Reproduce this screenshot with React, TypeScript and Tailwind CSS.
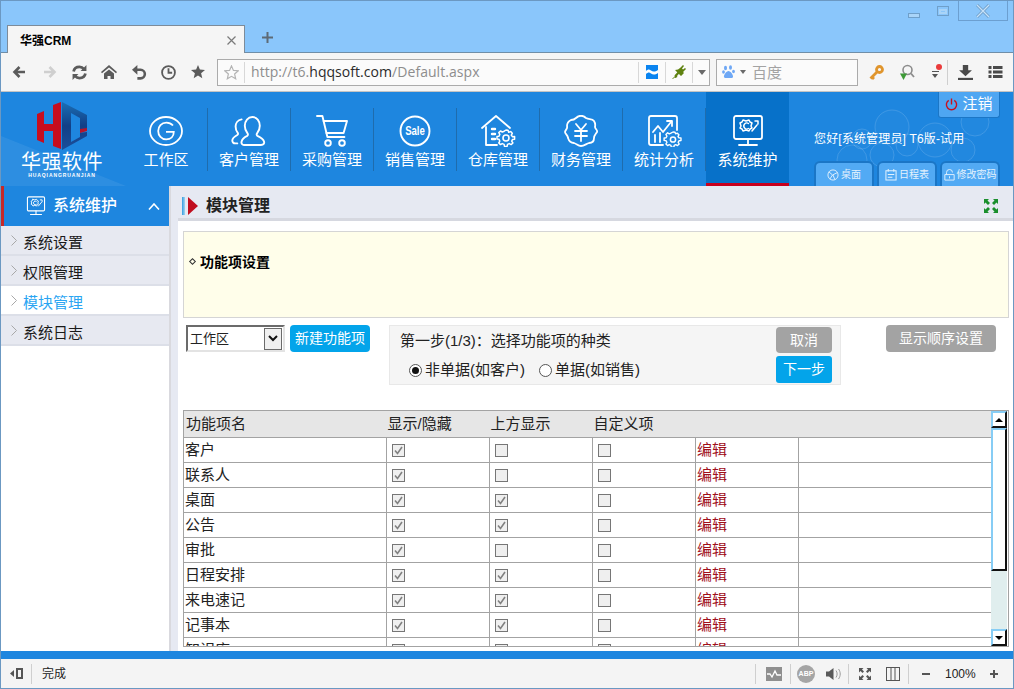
import React from "react";

const navIcon = "w-[36px] h-[32px] text-white";

function IconG() {
  return (
    <svg viewBox="0 0 36 32" className={navIcon} fill="none" stroke="currentColor" strokeWidth="1.8">
      <ellipse cx="18" cy="16" rx="16" ry="14" />
      <path d="M25 10.5C23 8.4 20.8 7.6 18.4 7.6c-5 0-8.2 3.8-8.2 8.4s3.3 8.4 8 8.4c4.6 0 7.6-3 7.6-7.6H18" />
    </svg>
  );
}
function IconUsers() {
  return (
    <svg viewBox="0 0 36 32" className={navIcon} fill="none" stroke="currentColor" strokeWidth="1.9" strokeLinejoin="round" strokeLinecap="round">
      <path d="M13 30h17c2.6 0 3.6-1.6 3-3.6-.8-2.8-4-4.4-6.6-5.6-.9-.5-1-1.6-.2-2.6 1.6-2 2.6-4.4 2.6-7.4 0-5-3-8.8-7.4-8.8s-7.6 3.8-7.6 8.8c0 3 1 5.4 2.6 7.4.8 1 .7 2.1-.2 2.6-2.6 1.2-4.8 2.8-5.6 5.6-.6 2 .7 3.6 2.4 3.6z" />
      <path d="M10.6 4.4C6.6 5 4.6 8.4 4.6 11.6c0 2.6.8 4.6 2 6 .7.9.6 1.9-.3 2.4-2.2 1.2-4.8 3-5 5.4-.1 1.6 1 3 3 3h2" />
    </svg>
  );
}
function IconCart() {
  return (
    <svg viewBox="0 0 36 32" className={navIcon} fill="none" stroke="currentColor" strokeWidth="1.9" strokeLinejoin="round" strokeLinecap="round">
      <path d="M3 1h5.4l5 21h17" />
      <path d="M9.6 6H33l-3.4 12H12.4" />
      <circle cx="14" cy="28" r="2.8" />
      <circle cx="28" cy="28" r="2.8" />
    </svg>
  );
}
function IconSale() {
  return (
    <svg viewBox="0 0 36 32" className={navIcon} fill="none" stroke="currentColor" strokeWidth="1.9">
      <ellipse cx="18" cy="16" rx="14.5" ry="14.5" />
      <text x="18" y="20.5" textAnchor="middle" fill="currentColor" stroke="none" fontSize="12" fontWeight="700" fontFamily="Liberation Sans, sans-serif" transform="translate(3.6 0) scale(0.8 1)">Sale</text>
    </svg>
  );
}
function IconStore() {
  return (
    <svg viewBox="0 0 36 32" className={navIcon} fill="none" stroke="currentColor" strokeWidth="1.8" strokeLinejoin="round" strokeLinecap="round">
      <path d="M2 13 16 1l14 12" />
      <path d="M6 12v18h11" />
      <path d="M12 14h3M12 19h3M12 24h3" strokeWidth="2.4" />
      <path d="M26 15l2 .2.7 2 2-.6 1.6 1.7-1 1.9 1.3 1.5 2-.1v2.6l-2 .2-.9 1.8 1.2 1.8-1.8 1.6-1.8-1-1.8.8-.4 2h-2.6l-.4-2-1.9-.8-1.7 1-1.7-1.7 1-1.8-.8-1.8-2-.3v-2.5l2-.3.8-1.8-1-1.8 1.7-1.6 1.8 1 1.9-.8z" strokeWidth="1.5" />
      <circle cx="26" cy="23" r="3" strokeWidth="1.6" />
    </svg>
  );
}
function IconMoney() {
  return (
    <svg viewBox="0 0 36 32" className={navIcon} fill="none" stroke="currentColor" strokeWidth="1.8" strokeLinejoin="round" strokeLinecap="round">
      <path d="M13 3c3-3 7-3 10 0 3 2 6 0 8 3s1 5 1 6c0 2 3 3 2 5-1 2-3 3-3 6s-2 5-5 5c-3 1-5 3-8 3s-4-2-7-3c-4 0-5-2-6-5 0-3-3-4-3-6s3-3 2-6c0-3 2-5 4-6 2 0 3 0 5-2z" />
      <path d="M13 9l5 6 5-6M12 16h12M12 21h12M18 15v11" />
    </svg>
  );
}
function IconStats() {
  return (
    <svg viewBox="0 0 36 32" className={navIcon} fill="none" stroke="currentColor" strokeWidth="1.8" strokeLinejoin="round" strokeLinecap="round">
      <path d="M17 30H5q-2 0-2-2V3q0-2 2-2h24q2 0 2 2v12" />
      <path d="M7 17l5-6 5 6 8-10" />
      <path d="M21 6h5v5" />
      <path d="M9 27v-7M14 27v-9" />
      <path d="M27 17l2 .2.6 1.6 1.7-.6 1.6 1.6-.9 1.7 1 1.4h2v2.6l-2 .2-.8 1.6 1 1.7-1.7 1.6-1.7-.9-1.6.7-.3 1.8h-2.6l-.4-1.8-1.7-.7-1.6.9-1.7-1.6 1-1.7-.8-1.6-2-.3v-2.4l2-.3.8-1.6-1-1.7 1.7-1.6 1.7 1 1.6-.7z" strokeWidth="1.4" />
      <circle cx="27" cy="24.5" r="2.6" strokeWidth="1.5" />
    </svg>
  );
}
function IconMonitor({ small }: { small?: boolean }) {
  return (
    <svg viewBox="0 0 36 32" className={small ? "w-[22px] h-[20px] text-white" : navIcon} fill="none" stroke="currentColor" strokeWidth="1.8" strokeLinejoin="round" strokeLinecap="round">
      <rect x="4" y="1" width="28" height="23" rx="2" />
      <path d="M18 24v5M9 30h18" />
      <path d="M13 5l3 1 3-1 1 2 2 1-1 3 1 2-2 1-1 2-3-1-3 1-1-2-2-1 1-2-1-3 2-1z" strokeWidth="1.5" />
      <path d="M18.500 8.500a3 3 0 1 0 0 5" strokeWidth="1.400" />
      <path d="M22 16l5-6M25 6l3 0 0 3" strokeWidth="1.500" />
    </svg>
  );
}

const navItems: [string, React.ReactNode][] = [
  ["工作区", <IconG />],
  ["客户管理", <IconUsers />],
  ["采购管理", <IconCart />],
  ["销售管理", <IconSale />],
  ["仓库管理", <IconStore />],
  ["财务管理", <IconMoney />],
  ["统计分析", <IconStats />],
];

function Logo() {
  return (
    <div className="w-[124px] shrink-0 flex flex-col items-center pt-[10px] pr-[2px] relative">
      <svg viewBox="0 0 52 48" className="w-[52px] h-[48px]">
        <defs>
          <linearGradient id="logoBlue" x1="0" y1="0" x2="0" y2="1">
            <stop offset="0" stopColor="#1a6fb5" />
            <stop offset="0.5" stopColor="#123f86" />
            <stop offset="1" stopColor="#1b4f9c" />
          </linearGradient>
        </defs>
        <path d="M1 12 8 9v13h9V3l8-3v47l-8-3V29H8v12l-7-3z" fill="#c70d1e" />
        <path d="M26 0l25 13v14l-7 1-2 3 9-1v4L26 48z" fill="url(#logoBlue)" />
        <path d="M35 11l9 5v19l-9 5z" fill="#1e86df" />
        <path d="M44 27l7-1v3l-7 2z" fill="#b5142a" />
      </svg>
      <div className="text-white text-[20px] leading-[20px] mt-[2px] tracking-[0.5px] whitespace-nowrap">华强软件</div>
      <div className="text-white text-[5px] leading-[6px] tracking-[0.9px] whitespace-nowrap font-bold">HUAQIANGRUANJIAN</div>
    </div>
  );
}

function HeaderBg() {
  const circles = [
    [892, 127, 17],
    [935, 140, 17],
    [975, 122, 14],
    [862, 139, 10],
    [852, 160, 15],
    [882, 155, 12],
    [907, 145, 11],
    [963, 150, 12],
  ];
  return (
    <svg className="absolute left-0 top-0 w-[1012px] h-[94px] pointer-events-none" viewBox="0 0 1012 94">
      <path d="M0 44 125 94H0z" fill="#ffffff" fillOpacity="0.07" />
      {circles.map(([x, y, r], i) => (
        <circle key={i} cx={x - 1} cy={y - 92} r={r} fill="#ffffff" fillOpacity="0.02" stroke="#ffffff" strokeOpacity="0.14" />
      ))}
    </svg>
  );
}

function TabButton({ label, icon, w }: { label: string; icon: React.ReactNode; w: string }) {
  return (
    <div className={`${w} h-[25px] rounded-t-[6px] bg-[#52aaf4] border-2 border-b-0 border-[#1b76c6] flex items-center justify-center gap-[2px] text-[10px] text-[#e4f2fd]`}>
      {icon}
      <span className="whitespace-nowrap">{label}</span>
    </div>
  );
}

function Check({ checked }: { checked: boolean }) {
  return (
    <span className="block w-[13px] h-[13px] border border-[#767676] bg-[#efefef] ml-[5px]">
      {checked && (
        <svg viewBox="0 0 11 11" className="w-[11px] h-[11px]" fill="none" stroke="#808080" strokeWidth="1.6">
          <path d="M2 5.5 4.5 8.5 9 2" />
        </svg>
      )}
    </span>
  );
}

const rows: [string, boolean, boolean][] = [
  ["客户", true, false],
  ["联系人", true, false],
  ["桌面", true, true],
  ["公告", true, true],
  ["审批", true, false],
  ["日程安排", true, true],
  ["来电速记", true, true],
  ["记事本", true, true],
  ["知识库", true, false],
];

function Toolbar() {
  const grey = "#5b5b5b";
  return (
    <div className="h-[39px] bg-[#f5f5f5] flex items-center border-b border-[#c4c4c4] shrink-0">
      {/* back */}
      <svg viewBox="0 0 14 14" className="w-[14px] h-[14px] ml-[11px]" fill="none" stroke={grey} strokeWidth="2.6"><path d="M13 7H3M7.5 2 2.5 7l5 5" /></svg>
      <svg viewBox="0 0 14 14" className="w-[14px] h-[14px] ml-[17px]" fill="none" stroke="#cfcfcf" strokeWidth="2.6"><path d="M1 7h10M6.5 2l5 5-5 5" /></svg>
      {/* refresh */}
      <svg viewBox="0 0 14 14" className="w-[15px] h-[15px] ml-[15px]" fill="none" stroke={grey} strokeWidth="2.6"><path d="M1.500 6C2 3.200 4.200 1.800 7 1.800c1.800 0 3.200.8 4.200 2" /><path d="M12.500 8c-.5 2.800-2.700 4.200-5.500 4.200-1.800 0-3.200-.8-4.200-2" /><path d="M13.500 0v5.500H8z" fill={grey} stroke="none" /><path d="M.5 14V8.500H6z" fill={grey} stroke="none" /></svg>
      {/* home */}
      <svg viewBox="0 0 16 14" className="w-[16px] h-[14px] ml-[14px]" fill={grey}><path d="M8 0 16 7l-1 1.200L8 2.400 1 8.200 0 7z" /><path d="M3 8.600 8 4.400l5 4.200V14H9.500v-3h-3v3H3z" /></svg>
      {/* undo */}
      <svg viewBox="0 0 14 14" className="w-[15px] h-[15px] ml-[15px]" fill="none" stroke={grey} strokeWidth="2.400"><path d="M2.500 4.500h5.500a4 4 0 0 1 0 8H5" /><path d="M0 4.500 5 0v9z" fill={grey} stroke="none" /></svg>
      {/* clock */}
      <svg viewBox="0 0 14 14" className="w-[15px] h-[15px] ml-[14px]" fill="none" stroke={grey} strokeWidth="1.7"><circle cx="7" cy="7" r="6" /><path d="M7 3v4.200h3.400" /></svg>
      {/* star */}
      <svg viewBox="0 0 14 14" className="w-[14px] h-[14px] ml-[15px]" fill={grey}><path d="M7 0l1.900 4.600 5.100.4-3.900 3.200 1.200 5L7 10.600 2.700 13.200l1.200-5L0 5l5.100-.4z" /></svg>
      {/* URL */}
      <div className="ml-[12px] w-[493px] h-[27px] bg-[#fbfbfb] border border-[#ababab] flex items-center">
        <svg viewBox="0 0 14 14" className="w-[15px] h-[15px] ml-[6px]" fill="none" stroke="#b4b4b4" strokeWidth="1.100"><path d="M7 .8l1.800 4.200 4.500.4-3.400 3 1 4.500L7 10.600l-3.900 2.300 1-4.500-3.400-3 4.500-.4z" /></svg>
        <span className="w-px h-[21px] bg-[#d8d8d8] ml-[5px]" />
        <span className="ml-[6px] w-[387px] text-[14px] tracking-[0.05px] text-[#8d8d8d] font-['Open_Sans',sans-serif] whitespace-nowrap leading-none">http://t6.<span className="text-[#2b2b2b]">hqqsoft.com</span>/Default.aspx</span>
        <span className="w-px h-[21px] bg-[#d8d8d8]" />
        <svg viewBox="0 0 12 14" className="w-[12px] h-[14px] ml-[7px]"><rect width="12" height="14" fill="#0a84f0" /><path d="M0 6c2-2 3-2 5-.5s4 1.500 7-.5v3c-3 2-5 2-7 .5s-3-1-5 .5z" fill="#fff" /></svg>
        <span className="w-px h-[21px] bg-[#d8d8d8] ml-[7px]" />
        <svg viewBox="0 0 14 14" className="w-[14px] h-[14px] ml-[6px]" fill="#5f8210"><path d="M0 14l3-3-.6-.6L7 5.500 8.500 7 5 11l.4 1-2 1-1-.4-1.400 1.400z" /><path d="M6 4.500 8 3l3-3 1 1-2 2.500L11 4.500 13 3l1 1-3 3 1 1-3 3-6-6z" /></svg>
        <span className="w-px h-[21px] bg-[#d8d8d8] ml-[6px]" />
        <span className="ml-[5px] w-0 h-0 border-x-[4px] border-x-transparent border-t-[5px] border-t-[#6a6a6a]" />
      </div>
      {/* search */}
      <div className="ml-[6px] w-[142px] h-[27px] bg-[#fbfbfb] border border-[#ababab] flex items-center">
        <svg viewBox="0 0 14 14" className="w-[14px] h-[14px] ml-[5px]" fill="#6fa8f5"><ellipse cx="3.500" cy="3" rx="1.500" ry="2.200" /><ellipse cx="8.500" cy="2.500" rx="1.500" ry="2.200" /><ellipse cx="1.500" cy="7" rx="1.400" ry="1.800" /><ellipse cx="11.500" cy="6.500" rx="1.400" ry="1.800" /><path d="M6.500 6c2 0 5 4 4.500 6-.5 1.500-3 1-4.500 1S2.500 13.500 2 12c-.5-2 2.500-6 4.500-6z" /></svg>
        <span className="ml-[4px] w-0 h-0 border-x-[3.500px] border-x-transparent border-t-[4px] border-t-[#6a6a6a]" />
        <span className="ml-[6px] text-[15px] text-[#a3a3a3] leading-none">百度</span>
      </div>
      {/* key */}
      <svg viewBox="0 0 15 15" className="w-[15px] h-[15px] ml-[11px]" fill="none" stroke="#e0952d" strokeWidth="2.800"><circle cx="10.500" cy="4.500" r="3" /><path d="M8.500 6.500 1.500 13.500M3 12l2 2" /></svg>
      {/* search-arrow */}
      <svg viewBox="0 0 16 16" className="w-[16px] h-[16px] ml-[15px]" fill="none"><circle cx="8.500" cy="6" r="4.500" stroke="#8c8c8c" strokeWidth="1.600" /><path d="M12 9.500l3 3.500" stroke="#8c8c8c" strokeWidth="1.800" /><path d="M1 9.500h7L4.500 16z" fill="#3d9a36" /></svg>
      {/* filter w/ dot */}
      <div className="relative w-[12px] h-[16px] ml-[15px] flex flex-col items-center pt-[7px]">
        <span className="absolute right-0 top-0 w-[6px] h-[6px] rounded-full bg-[#ea3b3b]" />
        <span className="w-[7px] h-px bg-[#555] mb-[2px] -ml-[2px]" />
        <span className="w-0 h-0 border-x-[3.500px] border-x-transparent border-t-[4px] border-t-[#555] -ml-[2px]" />
      </div>
      <span className="w-px h-[25px] bg-[#cfcfcf] ml-[5px]" />
      {/* download */}
      <svg viewBox="0 0 14 14" className="w-[15px] h-[15px] ml-[10px]" fill="#4a4a4a"><path d="M4.500 0h5v5H13L7 10.500 1 5h3.500z" /><rect y="12" width="14" height="2" /></svg>
      {/* list */}
      <svg viewBox="0 0 14 14" className="w-[15px] h-[14px] ml-[15px]" fill="#4a4a4a"><rect y="1" width="3" height="3" /><rect x="4.500" y="1" width="9.500" height="3" /><rect y="5.500" width="3" height="3" /><rect x="4.500" y="5.500" width="9.500" height="3" /><rect y="10" width="3" height="3" /><rect x="4.500" y="10" width="9.500" height="3" /></svg>
    </div>
  );
}

function TitleBar() {
  return (
    <div className="h-[52px] bg-[#8ac6fb] relative shrink-0 flex flex-col justify-end">
      {/* window controls */}
      <div className="absolute right-[5px] top-0 flex items-start">
        <span className="w-[12px] h-[5px] border border-[#6f9fc9] bg-[#a9d4f8] mt-[12px] mr-[17px]" />
        <span className="w-[12px] h-[10px] border border-[#6f9fc9] mt-[5px] mr-[9px] flex items-center justify-center"><span className="w-[8px] h-[5px] border-2 border-[#a9d4f8] bg-[#8ac6fb]" /></span>
        <span className="w-[50px] h-[20px] border border-t-0 border-[#6c9fd0] flex items-center justify-center">
          <svg viewBox="0 0 14 14" className="w-[14px] h-[14px]" fill="none" stroke="#6f9fc9" strokeWidth="3"><path d="M1 1l12 12M13 1 1 13" /><path d="M1 1l12 12M13 1 1 13" stroke="#c7e2fa" strokeWidth="1.200" /></svg>
        </span>
      </div>
      <div className="flex items-center h-[28px] border-b border-[#6f8ea8]">
        <div className="ml-[6px] w-[238px] h-[28px] bg-[#f5f5f5] border border-b-0 border-[#7d8b99] flex items-center pl-[12px] pr-[8px] pt-[2px] justify-between -mb-px">
          <span className="font-bold text-[12px] text-black">华强CRM</span>
          <svg viewBox="0 0 9 9" className="w-[9px] h-[9px]" fill="none" stroke="#7a7a7a" strokeWidth="1.200"><path d="M.5.500l8 8M8.500.500l-8 8" /></svg>
        </div>
        <svg viewBox="0 0 11 11" className="w-[11px] h-[11px] ml-[17px] -mt-[2px]" fill="none" stroke="#5d6a76" strokeWidth="2"><path d="M5.500 0v11M0 5.500h11" /></svg>
      </div>
    </div>
  );
}

function AppHeader() {
  return (
    <div className="h-[94px] bg-[#1e86df] relative flex shrink-0">
      <HeaderBg />
      <Logo />
      {navItems.map(([label, icon]) => (
        <React.Fragment key={label}>
          <div className="w-[82px] relative flex flex-col items-center pt-[23px] text-white">
            {icon}
            <span className="text-[15px] leading-[20px] mt-[3px] whitespace-nowrap">{label}</span>
          </div>
          <span className="w-px h-[63px] bg-[#1f6cad] mt-[16px] relative" />
        </React.Fragment>
      ))}
      <div className="w-[83px] h-[94px] bg-[#0771c9] border-b-[3px] border-[#c8001e] relative flex flex-col items-center pt-[23px] text-white">
        <IconMonitor />
        <span className="text-[15px] leading-[20px] mt-[3px] whitespace-nowrap">系统维护</span>
      </div>
      <div className="relative flex-1 flex flex-col">
        <div className="self-end mr-[13px] w-[62px] h-[26px] bg-[#4ea6f2] border border-t-0 border-[#1b76c6] rounded-b-[3px] flex items-center justify-center gap-[4px] text-white text-[15px]">
          <svg viewBox="0 0 14 14" className="w-[13px] h-[13px]" fill="none" stroke="#c8101e" strokeWidth="1.500"><path d="M4 2.500a5.500 5.500 0 1 0 6 0M7 .5V7" /></svg>
          注销
        </div>
        <div className="ml-[25px] mt-[12px] text-[12px] tracking-[0.15px] leading-[18px] text-white whitespace-nowrap">您好[系统管理员] T6版-试用</div>
        <div className="flex gap-[3px] ml-[25px] mt-[13px]">
          <TabButton
            w="w-[60px]"
            label="桌面"
            icon={<svg viewBox="0 0 13 13" className="w-[12px] h-[12px]" fill="none" stroke="#e4f2fd" strokeWidth="1"><circle cx="6.500" cy="6.500" r="5.500" /><path d="M2 3l4 3.500L3 11M6 6.500 11 4M6.500 6.500l2 5" /></svg>}
          />
          <TabButton
            w="w-[60px]"
            label="日程表"
            icon={<svg viewBox="0 0 13 13" className="w-[12px] h-[12px]" fill="none" stroke="#e4f2fd" strokeWidth="1.100"><path d="M1 2h11v10H1zM3.500 0v3M9.500 0v3M3 6h7M3 9h5" /></svg>}
          />
          <TabButton
            w="w-[60px]"
            label="修改密码"
            icon={<svg viewBox="0 0 13 13" className="w-[11px] h-[12px]" fill="none" stroke="#e4f2fd" strokeWidth="1.100"><path d="M3 6V3.500a3.500 3.500 0 0 1 7 0M1 6h11v6.500H1zM6.500 8v2.500" /></svg>}
          />
        </div>
      </div>
    </div>
  );
}

function Sidebar() {
  const items = ["系统设置", "权限管理", "模块管理", "系统日志"];
  return (
    <div className="w-[168px] shrink-0 bg-white flex flex-col">
      <div className="h-[40px] bg-[#1e86df] border-l-[3px] border-[#c62828] flex items-center pl-[21px] text-white">
        <IconMonitor small />
        <span className="ml-[6px] text-[16px] font-medium leading-none">系统维护</span>
        <svg viewBox="0 0 12 7" className="w-[12px] h-[7px] ml-[31px]" fill="none" stroke="#fff" strokeWidth="1.600"><path d="M1 6.500 6 1l5 5.500" /></svg>
      </div>
      {items.map((t, i) => (
        <div
          key={t}
          className={`h-[30px] flex items-center pl-[10px] pt-[6px] border-b-2 border-[#dcdfe8] text-[15px] ${i === 2 ? "bg-white text-[#2aa5f2]" : "bg-[#e7e9f1] text-[#1a1a1a]"}`}
        >
          <svg viewBox="0 0 6 11" className="w-[6px] h-[11px] -mt-[5px]" fill="none" stroke="#a8a8a8" strokeWidth="1"><path d="M.5.500l5 5-5 5" /></svg>
          <span className="ml-[6px]">{t}</span>
        </div>
      ))}
    </div>
  );
}

function ScrollBtn({ up }: { up?: boolean }) {
  return (
    <div className="w-[16px] h-[17px] bg-white border-2 border-[#87cdf5] border-r-[#111] border-b-[#111] flex items-center justify-center shrink-0">
      <span className={`w-0 h-0 border-x-[4px] border-x-transparent ${up ? "border-b-[4px] border-b-black" : "border-t-[4px] border-t-black"}`} />
    </div>
  );
}

function FeatureTable() {
  return (
    <div className="w-[826px] h-[237px] flex text-[15px] text-[#222]">
      <div className="w-[808px] h-[237px] shrink-0 overflow-hidden border-b border-[#a3a3a3]">
        <table className="table-fixed border-collapse w-[809px]">
          <colgroup>
            <col className="w-[203px]" />
            <col className="w-[103px]" />
            <col className="w-[103px]" />
            <col className="w-[103px]" />
            <col className="w-[103px]" />
            <col className="w-[194px]" />
          </colgroup>
          <thead>
            <tr className="h-[27px] bg-[#e6e6e6] border border-[#a3a3a3]">
              <th className="font-normal text-left pl-[2px]">功能项名</th>
              <th className="font-normal text-left pl-[1px]">显示/隐藏</th>
              <th className="font-normal text-left pl-[1px]">上方显示</th>
              <th className="font-normal text-left pl-[1px]">自定义项</th>
              <th />
              <th />
            </tr>
          </thead>
          <tbody>
            {rows.map(([name, a, b]) => (
              <tr key={name} className="h-[25px]">
                <td className="border border-[#a3a3a3] pl-[1px] p-0 leading-[20px] overflow-hidden">{name}</td>
                <td className="border border-[#a3a3a3] p-0"><Check checked={a} /></td>
                <td className="border border-[#a3a3a3] p-0"><Check checked={b} /></td>
                <td className="border border-[#a3a3a3] p-0"><Check checked={false} /></td>
                <td className="border border-[#a3a3a3] p-0 pl-[1px] text-[#a00f1c] leading-[20px]">编辑</td>
                <td className="border border-[#a3a3a3] p-0" />
              </tr>
            ))}
          </tbody>
        </table>
      </div>
      <div className="w-[18px] h-[237px] shrink-0 border border-l-0 border-[#a3a3a3] bg-white pr-px">
        <div className="w-[16px] h-[235px] bg-[#e0eeee] flex flex-col">
          <ScrollBtn up />
          <div className="h-[143px] bg-white border-2 border-[#87cdf5] border-r-[#111] border-b-[#111] shrink-0" />
          <div className="flex-1" />
          <ScrollBtn />
        </div>
      </div>
    </div>
  );
}

function Content() {
  return (
    <div className="flex-1 min-w-0 flex">
      {/* gutter */}
      <div className="w-[9px] shrink-0 bg-[#e6e9f2] border-l-[2px] border-[#d9d9de]" />
      <div className="flex-1 min-w-0 flex flex-col">
        <div className="h-[35px] bg-[#e6e9f2] flex items-center shrink-0 border-b-[3px] border-[#d6d8e0] pl-[4px] pt-[8px]">
          <span className="w-[3px] h-[18px] bg-gradient-to-r from-[#2c9de0] to-[#9fd4f0]" />
          <span className="ml-[3px] w-0 h-0 border-y-[9px] border-y-transparent border-l-[10px] border-l-[#c00d1e]" />
          <span className="ml-[8px] font-bold text-[16px] text-[#222] leading-none">模块管理</span>
          <svg viewBox="0 0 14 14" className="w-[14px] h-[14px] ml-auto mr-[15px]" fill="#1a8f2d"><path d="M0 0h5L3.500 1.500 6 4 4 6 1.500 3.500 0 5zM14 0v5l-1.500-1.500L10 6 8 4l2.500-2.500L9 0zM0 14V9l1.500 1.500L4 8l2 2-2.500 2.500L5 14zM14 14H9l1.500-1.500L8 10l2-2 2.500 2.500L14 9z" /></svg>
        </div>
        <div className="flex-1 bg-white pt-[10px] pl-[5px] min-h-0">
          <div className="w-[826px] h-[87px] bg-[#fffeea] border border-[#d5d5d5] flex items-start pt-[21px] pl-[5px] text-[14px] font-bold text-black">
            <span className="w-[5px] h-[5px] rotate-45 border border-[#333] mr-[5px] ml-[1px] mt-[6px]" />
            <span className="leading-[18px]">功能项设置</span>
          </div>
          <div className="flex items-start mt-[7px] ml-[3px] h-[85px] text-[14px] text-[#222]">
            {/* select */}
            <div className="w-[99px] h-[27px] bg-white border-2 border-[#6b6b6b] border-r-[#e3e3e3] border-b-[#e3e3e3] flex items-center pl-[2px] justify-between pr-[1px] text-[13px]">
              <span>工作区</span>
              <span className="w-[18px] h-[22px] bg-[#f0f0f0] border border-[#6b6b6b] flex items-center justify-center">
                <svg viewBox="0 0 10 7" className="w-[10px] h-[7px]" fill="none" stroke="#111" strokeWidth="2"><path d="M1 1l4 4 4-4" /></svg>
              </span>
            </div>
            <div className="ml-[5px] w-[80px] h-[27px] bg-[#03a4ea] rounded-[4px] text-white flex items-center justify-center whitespace-nowrap">新建功能项</div>
            <div className="ml-[19px] w-[452px] h-[60px] bg-[#f5f5f5] border border-[#e8e8e8] flex justify-between pl-[10px] pr-[8px] pt-[1px] text-[15px]">
              <div className="flex flex-col">
                <div className="h-[26px] leading-[26px] mt-[1px]">第一步(1/3)：选择功能项的种类</div>
                <div className="flex items-center mt-[3px] ml-[9px] h-[26px]">
                  <span className="w-[13px] h-[13px] rounded-full border border-[#555] bg-white flex items-center justify-center"><span className="w-[7px] h-[7px] rounded-full bg-[#111]" /></span>
                  <span className="ml-[3px]">非单据(如客户)</span>
                  <span className="ml-[14px] w-[13px] h-[13px] rounded-full border border-[#555] bg-white" />
                  <span className="ml-[3px]">单据(如销售)</span>
                </div>
              </div>
              <div className="flex flex-col gap-[3px] text-[14px]">
                <div className="w-[56px] h-[26px] bg-[#a3a3a3] rounded-[4px] text-white flex items-center justify-center">取消</div>
                <div className="w-[56px] h-[27px] bg-[#03a4ea] rounded-[3px] text-white flex items-center justify-center">下一步</div>
              </div>
            </div>
            <div className="ml-[45px] w-[110px] h-[27px] bg-[#a3a3a3] rounded-[4px] text-white flex items-center justify-center whitespace-nowrap">显示顺序设置</div>
          </div>
          <FeatureTable />
        </div>
      </div>
    </div>
  );
}

function StatusBar() {
  const sep = "w-px h-[20px] bg-[#cfcfcf]";
  return (
    <div className="h-[29px] bg-[#f4f4f4] shrink-0 flex items-center text-[12px] text-[#222]">
      <svg viewBox="0 0 13 11" className="w-[13px] h-[11px] ml-[9px]" fill="#555"><path d="M0 5.500 4 2v7z" /><path d="M6 0h7v11H6zM8 2v7h3V2z" /></svg>
      <span className={`${sep} ml-[8px]`} />
      <span className="ml-[10px]">完成</span>
      <span className={`${sep} ml-auto`} />
      <svg viewBox="0 0 16 14" className="w-[16px] h-[14px] ml-[10px]"><rect width="16" height="14" fill="#8f8f8f" /><path d="M1 7h3l2 3 3-6 2 4h4" fill="none" stroke="#fff" strokeWidth="1.300" /></svg>
      <span className={`${sep} ml-[8px]`} />
      <span className="ml-[6px] w-[18px] h-[18px] rounded-full bg-[#a5a5a5] flex items-center justify-center text-white text-[7px] font-bold leading-none">ABP</span>
      <svg viewBox="0 0 15 14" className="w-[15px] h-[14px] ml-[11px]" fill="#5a5a5a"><path d="M0 4.500h3L7.500 1v12L3 9.500H0z" /><path d="M10 3.500c1.500 2 1.500 5 0 7M12.500 2c2.300 3 2.300 7 0 10" fill="none" stroke="#9a9a9a" strokeWidth="1" /></svg>
      <span className={`${sep} ml-[7px]`} />
      <svg viewBox="0 0 12 12" className="w-[12px] h-[12px] ml-[10px]" fill="#555"><path d="M0 0h4.500L3 1.500 5 3.500 3.500 5 1.500 3 0 4.500zM12 0v4.500L10.500 3 8.500 5 7 3.500 9 1.500 7.500 0zM0 12V7.500L1.500 9l2-2L5 8.500 3 10.500 4.500 12zM12 12H7.500L9 10.500 7 8.500 8.500 7l2 2L12 7.500z" /></svg>
      <svg viewBox="0 0 14 14" className="w-[14px] h-[14px] ml-[15px]" fill="none" stroke="#555" strokeWidth="1"><rect x=".5" y=".5" width="13" height="13" /><path d="M5 .5v13M9 .5v13" /></svg>
      <span className={`${sep} ml-[8px]`} />
      <span className="ml-[13px] w-[8px] h-[2px] bg-[#555]" />
      <span className="ml-[15px] w-[30px] text-center leading-none whitespace-nowrap">100%</span>
      <svg viewBox="0 0 8 8" className="w-[8px] h-[8px] ml-[15px] mr-[15px]" fill="none" stroke="#555" strokeWidth="2"><path d="M4 0v8M0 4h8" /></svg>
    </div>
  );
}

export default function App() {
  return (
    <div className="w-[1014px] h-[689px] overflow-hidden border border-[#6b98c2] flex flex-col font-['Liberation_Sans','Noto_Sans_CJK_SC',sans-serif] bg-white">
      <TitleBar />
      <Toolbar />
      <AppHeader />
      <div className="flex-1 min-h-0 flex">
        <Sidebar />
        <Content />
      </div>
      <div className="h-[8px] bg-[#1e86df] shrink-0" />
      <StatusBar />
    </div>
  );
}
